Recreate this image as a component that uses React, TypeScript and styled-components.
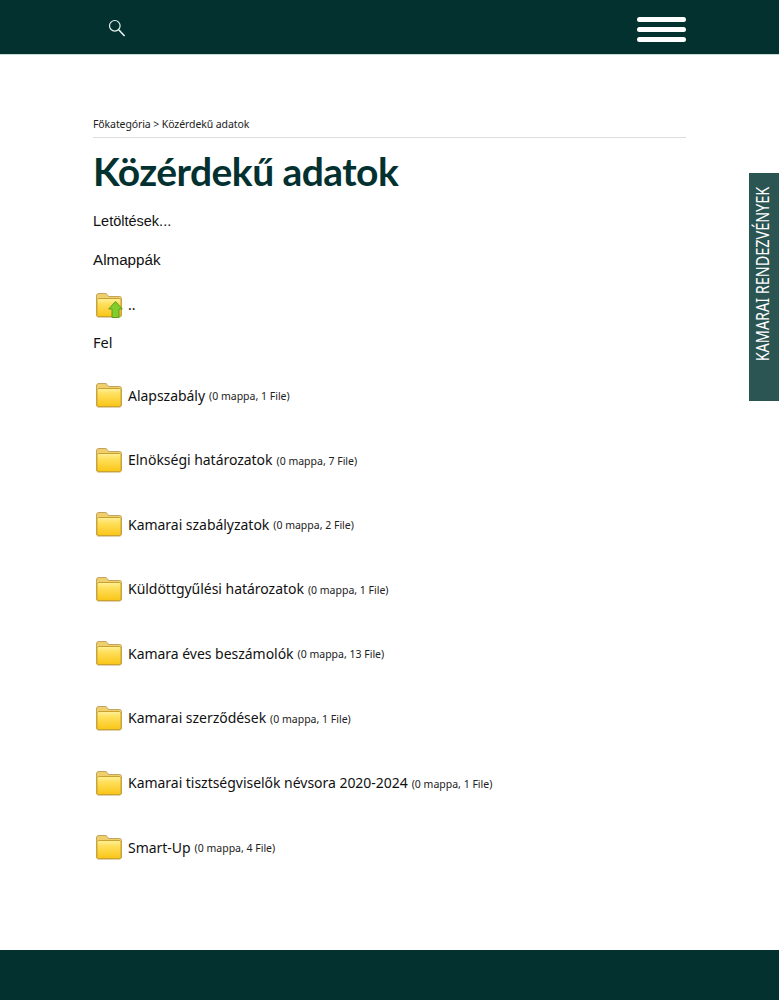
import React from 'react';
import styled, { createGlobalStyle } from 'styled-components';

const folders = [
  { name: 'Alapszabály', count: '(0 mappa, 1 File)' },
  { name: 'Elnökségi határozatok', count: '(0 mappa, 7 File)' },
  { name: 'Kamarai szabályzatok', count: '(0 mappa, 2 File)' },
  { name: 'Küldöttgyűlési határozatok', count: '(0 mappa, 1 File)' },
  { name: 'Kamara éves beszámolók', count: '(0 mappa, 13 File)' },
  { name: 'Kamarai szerződések', count: '(0 mappa, 1 File)' },
  { name: 'Kamarai tisztségviselők névsora 2020-2024', count: '(0 mappa, 1 File)' },
  { name: 'Smart-Up', count: '(0 mappa, 4 File)' },
];

const FolderIcon = ({ up }: { up?: boolean }) => (
  <FolderSvg viewBox="0 0 28 26" width="28" height="26">
    <defs>
      <linearGradient id={up ? 'fu' : 'fn'} x1="0" y1="0" x2="0" y2="1">
        <stop offset="0" stopColor="#fff09a" />
        <stop offset="0.3" stopColor="#ffe05c" />
        <stop offset="1" stopColor="#fac516" />
      </linearGradient>
    </defs>
    <path
      d="M1.500 4C1.500 2.200 2.500 1.500 4 1.500h6c1.100 0 1.700.4 2.300 1.200L13.500 4.500H24.500c1.300 0 2 .8 2 2V23c0 1.300-.8 2-2 2H3.500c-1.300 0-2-.7-2-2Z"
      fill="#efcf6c"
      stroke="#c4a45c"
      strokeWidth="1"
    />
    <path
      d="M2 8.500C2 7.300 2.800 6.500 4 6.500H24c1.200 0 2 .8 2 2V22.500c0 1.200-.8 2-2 2H4c-1.200 0-2-.8-2-2Z"
      fill={`url(#${up ? 'fu' : 'fn'})`}
      stroke="#c9a230"
      strokeWidth="1"
    />
    {up && (
      <path
        d="M20.500 9.500l6.800 7.500h-3.300v8.500h-7v-8.500h-3.300Z"
        fill="#84cc2c"
        stroke="#5f9e1e"
        strokeWidth="1"
      />
    )}
  </FolderSvg>
);

const App = () => (
  <>
    <GlobalStyle />
    <Page>
      <TopBar>
        <TopBarInner>
          <SearchButton>
            <svg viewBox="0 0 18 18" width="18" height="18" fill="none" stroke="#e6f2f0">
              <circle cx="6.800" cy="6.800" r="5.300" strokeWidth="1.200" />
              <path d="M10.700 10.700 16.600 17" strokeWidth="1.600" />
            </svg>
          </SearchButton>
          <Burger>
            <BurgerLine />
            <BurgerLine />
            <BurgerLine />
          </Burger>
        </TopBarInner>
      </TopBar>

      <Main>
        <Breadcrumb>Főkategória &gt; Közérdekű adatok</Breadcrumb>
        <Title>Közérdekű adatok</Title>
        <Downloads>Letöltések...</Downloads>
        <SubHeading>Almappák</SubHeading>
        <UpRow>
          <FolderIcon up />
          <UpDots>..</UpDots>
        </UpRow>
        <UpLabel>Fel</UpLabel>
        <FolderList>
          {folders.map((f) => (
            <FolderRow key={f.name}>
              <FolderIcon />
              <FolderName>{f.name}</FolderName>
              <FolderCount>{f.count}</FolderCount>
            </FolderRow>
          ))}
        </FolderList>
      </Main>

      <Footer />
      <SideTab>
        <SideTabText>KAMARAI RENDEZVÉNYEK</SideTabText>
      </SideTab>
    </Page>
  </>
);

export default App;

const GlobalStyle = createGlobalStyle`
  html, body {
    margin: 0;
    padding: 0;
    background: #ffffff;
  }
`;

const Page = styled.div`
  position: relative;
  width: 779px;
  height: 1000px;
  display: flex;
  flex-direction: column;
  overflow: hidden;
  font-family: 'Noto Sans', 'Open Sans', sans-serif;
  color: #111111;
`;

const TopBar = styled.header`
  height: 54px;
  flex: none;
  background: #02312f;
  box-shadow: 0 1px 0 #c3dbd7;
`;

const TopBarInner = styled.div`
  height: 100%;
  margin: 0 93px 0 108px;
  display: flex;
  align-items: center;
  justify-content: space-between;
`;

const SearchButton = styled.div`
  display: flex;
  margin-top: 2px;
`;

const Burger = styled.div`
  width: 49px;
  display: flex;
  flex-direction: column;
  gap: 5px;
  margin-top: 4px;
`;

const BurgerLine = styled.span`
  display: block;
  height: 5px;
  border-radius: 3px;
  background: #ffffff;
`;

const Main = styled.main`
  flex: 1;
  padding: 62px 93px 0;
`;

const Breadcrumb = styled.div`
  height: 21px;
  line-height: 16px;
  font-size: 10.500px;
  letter-spacing: -0.1px;
  color: #222222;
  border-bottom: 1px solid #dddddd;
`;

const Title = styled.h1`
  margin: 11px 0 0;
  font-family: 'Lato', 'Noto Sans', sans-serif;
  font-size: 39px;
  line-height: 44px;
  font-weight: 700;
  letter-spacing: -0.55px;
  color: #02312f;
`;

const Downloads = styled.div`
  margin-top: 19px;
  font-family: 'Liberation Sans', Arial, sans-serif;
  font-size: 14.500px;
  line-height: 18px;
`;

const SubHeading = styled.div`
  margin-top: 21px;
  font-family: 'Liberation Sans', Arial, sans-serif;
  font-size: 15.200px;
  line-height: 18px;
`;

const UpRow = styled.div`
  margin-top: 23px;
  margin-left: 2px;
  height: 26px;
  display: flex;
  align-items: center;
  gap: 5px;
`;

const UpDots = styled.span`
  font-size: 14px;
  line-height: 26px;
`;

const UpLabel = styled.div`
  margin-top: 15px;
  font-size: 14.500px;
  line-height: 18px;
`;

const FolderList = styled.div`
  margin-top: 31px;
  margin-left: 2px;
  display: flex;
  flex-direction: column;
  gap: 38.600px;
`;

const FolderRow = styled.div`
  height: 26px;
  display: flex;
  align-items: center;
`;

const FolderSvg = styled.svg`
  flex: none;
`;

const FolderName = styled.span`
  margin-left: 5px;
  font-size: 14px;
  letter-spacing: -0.03px;
`;

const FolderCount = styled.span`
  margin-left: 4px;
  margin-top: 2px;
  font-size: 10.500px;
  color: #222222;
`;

const Footer = styled.footer`
  height: 50px;
  flex: none;
  background: #02312f;
`;

const SideTab = styled.aside`
  position: absolute;
  top: 173px;
  right: 0;
  width: 30px;
  height: 228px;
  box-sizing: border-box;
  padding: 0 4px 26px 0;
  background: #2a5552;
  display: flex;
  align-items: center;
  justify-content: center;
`;

const SideTabText = styled.span`
  writing-mode: vertical-rl;
  transform: rotate(180deg) scaleY(0.8);
  font-size: 18px;
  line-height: 26px;
  white-space: nowrap;
  color: #ffffff;
`;
